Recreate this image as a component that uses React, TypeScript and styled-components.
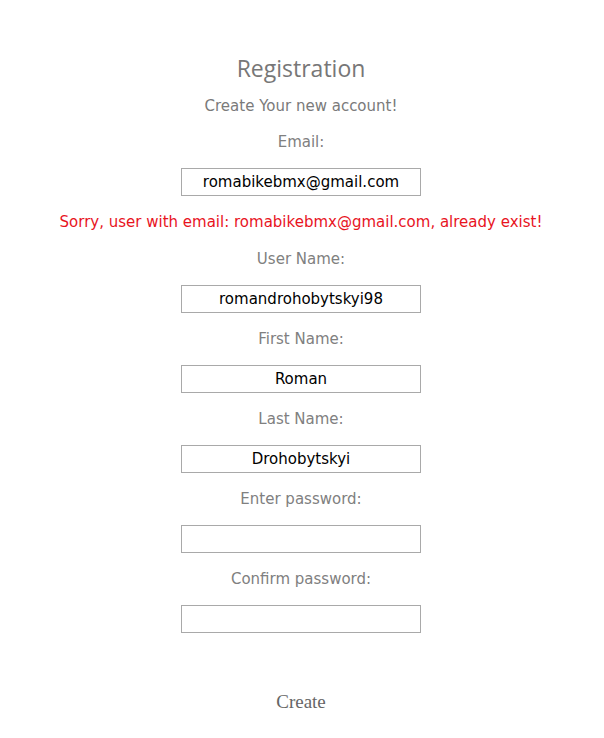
import React from 'react';
import styled, { createGlobalStyle } from 'styled-components';

const GlobalStyle = createGlobalStyle`
  html, body {
    margin: 0;
    padding: 0;
    background: #fff;
  }
`;

const Page = styled.form`
  display: flex;
  flex-direction: column;
  align-items: center;
  padding: 53px 2px 0 0;
  font-family: 'DejaVu Sans', Verdana, sans-serif;
`;

const Title = styled.h2`
  margin: 0 0 12px;
  font-family: 'Open Sans', 'Segoe UI', sans-serif;
  font-weight: 400;
  font-size: 23px;
  line-height: 30px;
  color: #777;
`;

const Subtitle = styled.p`
  margin: 1px 0 16px;
  font-size: 15px;
  line-height: 20px;
  color: #7a7a7a;
`;

const Label = styled.label`
  display: block;
  margin-bottom: 16px;
  font-size: 15px;
  line-height: 20px;
  color: #808080;
`;

const Input = styled.input`
  box-sizing: border-box;
  width: 240px;
  height: 28px;
  margin-bottom: 16px;
  padding: 0 4px;
  border: 1px solid #a9a9a9;
  outline: none;
  font-family: 'DejaVu Sans', Verdana, sans-serif;
  font-size: 15px;
  color: #000;
  text-align: center;
`;

const Error = styled.p`
  margin: 0 0 17px;
  font-size: 15px;
  line-height: 20px;
  color: #e8141e;
`;

const Submit = styled.button`
  margin-top: 41px;
  border: none;
  background: none;
  font-family: 'Liberation Serif', 'Times New Roman', serif;
  font-size: 19px;
  color: #666;
  cursor: pointer;
`;

interface Field {
  label: string;
  type: string;
  value: string;
}

const fields: Field[] = [
  { label: 'User Name:', type: 'text', value: 'romandrohobytskyi98' },
  { label: 'First Name:', type: 'text', value: 'Roman' },
  { label: 'Last Name:', type: 'text', value: 'Drohobytskyi' },
  { label: 'Enter password:', type: 'password', value: '' },
  { label: 'Confirm password:', type: 'password', value: '' },
];

const App: React.FC = () => {
  const email = 'romabikebmx@gmail.com';

  return (
    <>
      <GlobalStyle />
      <Page onSubmit={(e) => e.preventDefault()}>
        <Title>Registration</Title>
        <Subtitle>Create Your new account!</Subtitle>
        <Label>Email:</Label>
        <Input type="email" defaultValue={email} />
        <Error>Sorry, user with email: {email}, already exist!</Error>
        {fields.map((field) => (
          <React.Fragment key={field.label}>
            <Label>{field.label}</Label>
            <Input type={field.type} defaultValue={field.value} />
          </React.Fragment>
        ))}
        <Submit type="submit">Create</Submit>
      </Page>
    </>
  );
};

export default App;
